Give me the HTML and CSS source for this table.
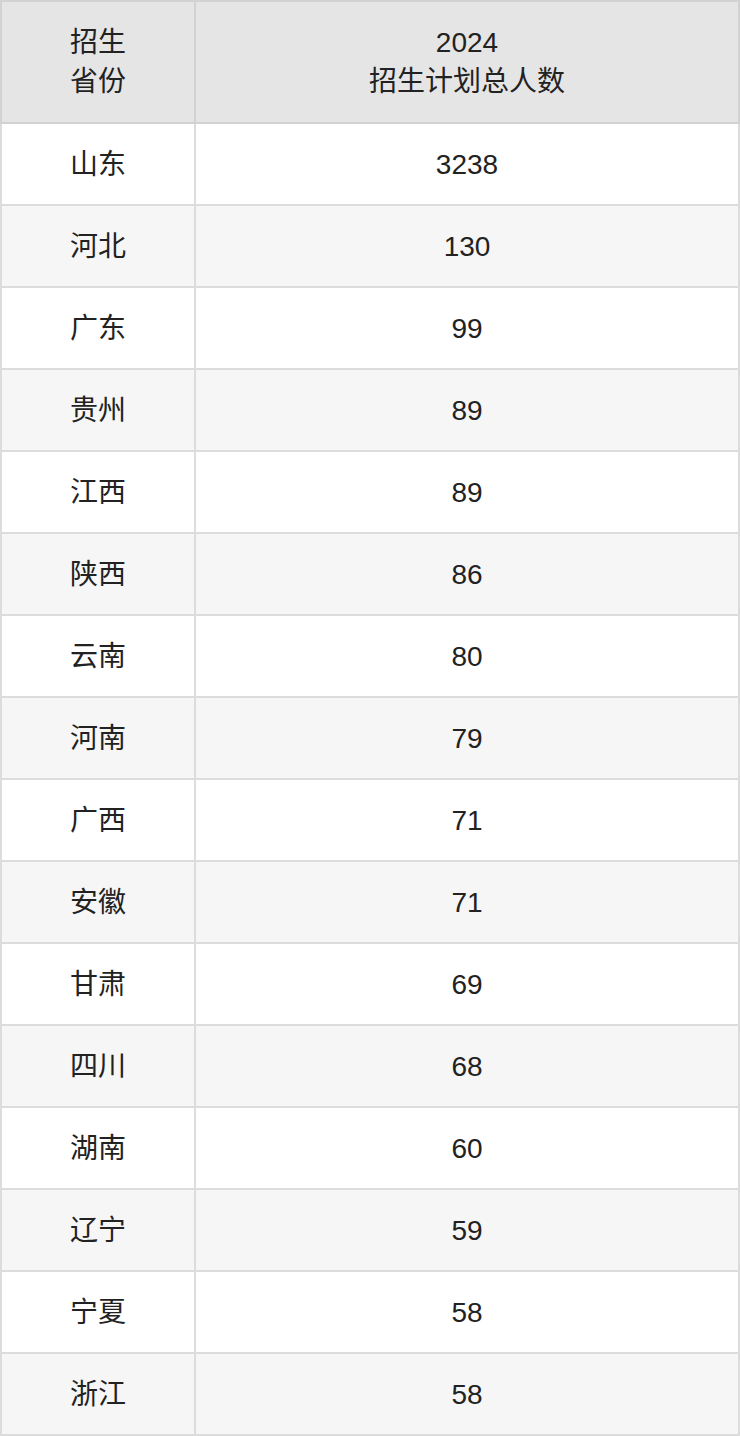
FILE: index.html
```html
<!DOCTYPE html>
<html lang="zh-CN">
<head>
<meta charset="utf-8">
<link rel="stylesheet" href="styles.css">
</head>
<body>
<table class="plan">
  <thead>
    <tr><th class="c1">招生<br>省份</th><th class="c2">2024<br>招生计划总人数</th></tr>
  </thead>
  <tbody>
    <tr><td>山东</td><td>3238</td></tr>
    <tr><td>河北</td><td>130</td></tr>
    <tr><td>广东</td><td>99</td></tr>
    <tr><td>贵州</td><td>89</td></tr>
    <tr><td>江西</td><td>89</td></tr>
    <tr><td>陕西</td><td>86</td></tr>
    <tr><td>云南</td><td>80</td></tr>
    <tr><td>河南</td><td>79</td></tr>
    <tr><td>广西</td><td>71</td></tr>
    <tr><td>安徽</td><td>71</td></tr>
    <tr><td>甘肃</td><td>69</td></tr>
    <tr><td>四川</td><td>68</td></tr>
    <tr><td>湖南</td><td>60</td></tr>
    <tr><td>辽宁</td><td>59</td></tr>
    <tr><td>宁夏</td><td>58</td></tr>
    <tr><td>浙江</td><td>58</td></tr>
  </tbody>
</table>
</body>
</html>
```
FILE: styles.css
```css
html, body {
  margin: 0;
  padding: 0;
  background: #fff;
}
.plan {
  width: 740px;
  border-collapse: collapse;
  table-layout: fixed;
  font-family: "Liberation Sans", "Noto Sans CJK SC", sans-serif;
  font-size: 28px;
  color: #222;
}
.plan th, .plan td {
  border: 2px solid #dcdcdc;
  text-align: center;
  vertical-align: middle;
  padding: 0;
  font-weight: normal;
  line-height: 39px;
}
.plan thead th {
  background: #e5e5e5;
  border-color: #d2d2d2;
  height: 120px;
}
.plan .c1 {
  width: 192px;
}
.plan td {
  height: 80px;
}
.plan tbody tr:nth-child(odd) td {
  background: #fff;
}
.plan tbody tr:nth-child(even) td {
  background: #f6f6f6;
}
```
